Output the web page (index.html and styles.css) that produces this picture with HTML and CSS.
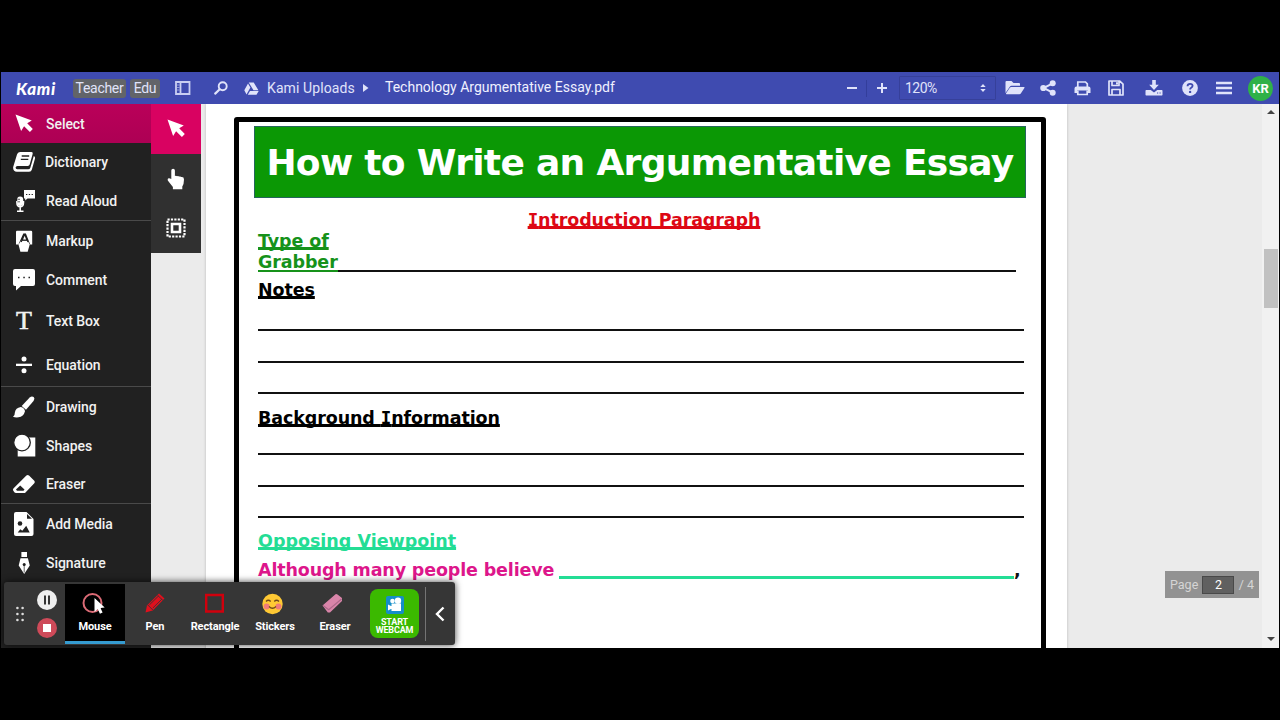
FILE: index.html
```html
<!DOCTYPE html>
<html lang="en">
<head>
  <meta charset="UTF-8" />
  <meta name="viewport" content="width=device-width, initial-scale=1.0" />
  <title>Technology Argumentative Essay.pdf | Kami</title>
  <link rel="stylesheet" href="styles.css">
</head>
<body>
<div class="app">
  <header class="topbar">
    <div class="logo">Kami</div>
    <span class="tag teacher">Teacher</span>
    <span class="tag edu">Edu</span>
    <svg class="ic-panel" width="16" height="14" viewBox="0 0 16 14"><path d="M1 1h13.500v12H1zM5.500 1v12" fill="none" stroke="currentColor" stroke-width="1.800"/><path d="M2 4h2.500M2 6.500h2.500M2 9h2.500" stroke="currentColor" opacity=".6"/></svg>
    <svg class="ic-search" width="14" height="14" viewBox="0 0 14 14"><circle cx="8.700" cy="5.200" r="4" fill="none" stroke="currentColor" stroke-width="1.900"/><path d="M5.700 8.300L1.200 12.600" stroke="currentColor" stroke-width="2.200" stroke-linecap="round"/></svg>
    <svg class="ic-drive" width="15" height="13" viewBox="0 0 15 13" fill="currentColor"><path d="M4.700 0.500h5l4.700 7.800h-4.900zM4 1.500l2.400 4.100-3.900 6.800L0.300 8.300zM6 8.900h8.700l-2.200 3.800H3.800z"/></svg>
    <span class="crumb">Kami Uploads</span>
    <svg class="ic-caret" width="6" height="8" viewBox="0 0 6 8"><path d="M0 0l5.500 4L0 8z" fill="currentColor"/></svg>
    <span class="filename">Technology Argumentative Essay.pdf</span>

    <div class="tools">
      <svg class="ic-minus" width="10" height="10" viewBox="0 0 10 10"><path d="M0 5h10" stroke="currentColor" stroke-width="2"/></svg>
      <i class="sep"></i>
      <svg class="ic-plus" width="10" height="10" viewBox="0 0 10 10"><path d="M0 5h10M5 0v10" stroke="currentColor" stroke-width="2"/></svg>
      <div class="zoom">120%
        <svg width="6" height="8" viewBox="0 0 6 8"><path d="M3 0l2.700 3H.3zM3 8L.3 5h5.400z" fill="currentColor"/></svg>
      </div>
      <svg class="ic-open" width="20" height="16" viewBox="0 0 20 16" fill="currentColor"><path d="M1.500 1h5l2 2H14q1 0 1 1v1.800H6.500q-1 0-1.700 1L0.500 13V2q0-1 1-1z"/><path d="M6.200 7H19q.9.200.4 1l-3.600 5.500q-.5.800-1.400.8H1.500q-.8-.2-.4-1l3.700-5.500q.5-.8 1.400-.8z"/></svg>
      <svg class="ic-share" width="16" height="16" viewBox="0 0 16 16" fill="currentColor"><path d="M12.800 3.300L3.500 8l9.300 4.700" fill="none" stroke="currentColor" stroke-width="2"/><circle cx="12.700" cy="3.300" r="3"/><circle cx="3.300" cy="8" r="3.100"/><circle cx="12.700" cy="12.700" r="3"/></svg>
      <svg class="ic-print" width="17" height="15" viewBox="0 0 17 15"><path d="M3.800 6V1h7.700l1.800 1.800V6" fill="none" stroke="currentColor" stroke-width="1.700"/><path d="M2.500 5.500h12q2 0 2 2V12H14V9.500H3V12H.5V7.500q0-2 2-2z" fill="currentColor"/><path d="M3.800 9.500v4h9.400v-4" fill="none" stroke="currentColor" stroke-width="1.700"/></svg>
      <svg class="ic-save" width="16" height="16" viewBox="0 0 16 16"><path d="M1 1h10.800L15 4.200V15H1zM4 1v4.500h7V1M4 15V9.500h8V15" fill="none" stroke="currentColor" stroke-width="1.700" stroke-linejoin="round"/><path d="M8 2.200h2v2.400H8z" fill="currentColor"/></svg>
      <svg class="ic-down" width="18" height="16" viewBox="0 0 18 16" fill="currentColor"><path d="M7.200 0h3.600v4.700h3L9 10 4.200 4.700h3z"/><path d="M1.200 10h4.500L9 12.600l3.300-2.600h4.500q.7 0 .7.700v4.100q0 .7-.7.700H1.200q-.7 0-.7-.7v-4.100q0-.7.700-.7z"/><path d="M12 13h1.200M14.500 13h1.200" stroke="#3f4bb0" stroke-width="1.200"/></svg>
      <svg class="ic-help" width="16" height="16" viewBox="0 0 16 16"><circle cx="8" cy="8" r="7.900" fill="currentColor"/><path d="M5.500 6.200q.1-2.400 2.500-2.400 2.600 0 2.600 2 0 1.200-1.400 1.900Q8.100 8.300 8.100 9.500" fill="none" stroke="#3f4bb0" stroke-width="1.800"/><circle cx="8.100" cy="11.900" r="1.200" fill="#3f4bb0"/></svg>
      <svg class="ic-menu" width="16" height="14" viewBox="0 0 16 14"><path d="M0 2h16M0 7h16M0 12h16" stroke="currentColor" stroke-width="2.300"/></svg>
      <div class="avatar">KR</div>
    </div>
  </header>

  <div class="main">
    <nav class="sidebar">
      <a class="item select active"><svg viewBox="0 0 22 22"><path d="M2.500 1.500l16.300 6-4.600 2.700 5.600 5.900-2.900 2.900-5.800-5.800-3 4.700z" fill="#fff"/></svg>Select</a>
      <a class="item dict"><svg viewBox="0 0 22 22"><path d="M7 1h11.500q1.600.1 1.200 1.700l-3 10.800q-.4 1.400-1.900 1.400H4.500q-1.800 0-1.900 1.700 0 1.700 1.700 1.700h10.900q1.600 0 2.100-1.500L20.800 5q1.700.8 1.200 2.500l-3.100 11q-.6 2.300-2.800 2.300H3.900Q0 20.500.1 16.200L4 3.500Q4.600 1 7 1z" fill="#fff"/><path d="M8.700 5h7.500M7.800 8.400h7.500" stroke="#212121" stroke-width="1.400"/></svg>Dictionary</a>
      <a class="item"><svg viewBox="0 0 22 22"><path d="M11 0h11v8.500h-7.500l-2.300 2V8.500H11z" fill="#fff"/><path d="M13 4.500h1.300M15.800 4.500h1.300M18.600 4.500h1.300" stroke="#212121" stroke-width="1.200"/><rect x="4.200" y="6.500" width="6" height="9.500" rx="2.900" fill="#fff"/><path d="M3.900 11v1.800q0 4 3.300 4t3.300-4V11M7.200 17v4M4 21.300h6.500" fill="none" stroke="#fff" stroke-width="1.500"/><path d="M4.500 9.300h2.500M4.500 11.800h2.500" stroke="#212121" stroke-width=".7"/></svg>Read Aloud</a>
      <hr>
      <a class="item"><svg viewBox="0 0 22 22"><path d="M4 .7h14q1.200 0 1.200 1.200V14.500h-2L12.900 3.500h-2.600L5.400 14.500H3V1.900Q3 .7 4 .7z" fill="#fff"/><path d="M8.300 10.500h6.300l2.100 4-2 7.200H7.400l-1.900-7.200z" fill="#fff"/><path d="M11.600 4L8.200 12M11.600 4l3.400 8M9.200 10.200h4.900" stroke="#212121" stroke-width="1.200"/><path d="M11.600 5.700l1.500 3.800h-3z" fill="#fff"/></svg>Markup</a>
      <a class="item"><svg viewBox="0 0 22 22"><path d="M2 0h18q2 0 2 2v13q0 2-2 2H8l-5 4.500V17H2q-2 0-2-2V2Q0 0 2 0z" fill="#fff"/><path d="M5 8.500h1.500M10.300 8.500h1.500M15.500 8.500H17" stroke="#212121" stroke-width="1.700"/></svg>Comment</a>
      <a class="item textbox"><b class="t-icon">T</b>Text Box</a>
      <a class="item equation"><svg viewBox="0 0 22 22"><path d="M3 9.700h16v2.300H3z" fill="#fff"/><circle cx="11" cy="4.900" r="2.500" fill="#fff"/><circle cx="11" cy="16.800" r="2.500" fill="#fff"/></svg>Equation</a>
      <hr>
      <a class="item drawing"><svg viewBox="0 0 22 22"><path d="M8.700 10l8-8.500q2.200-2 4-.4 1.600 1.700-.2 4L13 13.800z" fill="#fff"/><path d="M7.800 11q3.700.8 4.200 4.300-1.400 5.500-6.500 6-3.400.3-5.500-.5 2-.8 1.800-4Q2.500 11.800 7.800 11z" fill="#fff"/></svg>Drawing</a>
      <a class="item"><svg viewBox="0 0 22 22"><path d="M15 2.500h7.300v19H4.700V14h4z" fill="#fff"/><circle cx="9" cy="7.500" r="8.300" fill="#fff" stroke="#212121" stroke-width="1.300"/></svg>Shapes</a>
      <a class="item"><svg viewBox="0 0 22 22"><path d="M13.400 2.500q1.300-1.200 2.600 0l5.300 5.200q1.100 1.200 0 2.500L12 20H3q-1 0-1.700-.7L.2 17.600q-.7-1 .2-2.200z" fill="#fff"/><path d="M3 16.500L7.200 12.500l4.300 4-1 1.200H4z" fill="#212121"/></svg>Eraser</a>
      <hr>
      <a class="item media"><svg viewBox="0 0 22 24"><path d="M3 0h10.500L20.500 7v15q0 2-2 2H3q-2 0-2-2V2Q1 0 3 0z" fill="#fff"/><path d="M14 2v4.700h5z" fill="#212121"/><circle cx="7" cy="11.500" r="2.300" fill="#212121"/><path d="M4.700 20.500l2.600-3.200 2 1.500 3.900-5 3.500 6.700z" fill="#212121"/></svg>Add Media</a>
      <a class="item"><svg viewBox="0 0 22 22"><path d="M8.400 0h5.600v5H8.400zM7.500 6.300h7.400l1.900 7.200L11.200 22 5.700 13.500z" fill="#fff"/><circle cx="11.200" cy="12.500" r="1.500" fill="#212121"/><path d="M11.200 12v8.500" stroke="#212121" stroke-width=".7"/></svg>Signature</a>
    </nav>

    <div class="viewer">
      <div class="subtools">
        <div class="sub on"><svg width="22" height="22" viewBox="0 0 22 22"><path d="M2.500 1.500l16.300 6-4.600 2.700 5.600 5.900-2.900 2.900-5.800-5.800-3 4.700z" fill="#fff"/></svg></div>
        <div class="sub"><svg width="22" height="22" viewBox="0 0 22 22"><path d="M6.300 2.500q0-1.800 1.800-1.800T9.900 2.500v5.600q.8-.8 2.200.1 1.100-.5 2.100.4 1.400-.5 2.200.5 2.600-.3 2.600 2.400 0 4.500-1.700 7v2.800H7.900v-2.200Q5.500 16 2.800 12.500q-.6-1.800.8-2.300 1.200-.2 2.700.9z" fill="#fff"/></svg></div>
        <div class="sub"><svg width="20" height="20" viewBox="0 0 20 20"><path d="M1.500 1.500h17v17h-17z" fill="none" stroke="#fff" stroke-width="2.200" stroke-dasharray="2.200 1.200"/><path d="M6 6h8v8H6z" fill="none" stroke="#fff" stroke-width="2.600"/></svg></div>
      </div>

      <div class="page">
        <div class="frame">
          <h1>How to Write an Argumentative Essay</h1>
          <h2 class="intro"><u><span class="cap-i">I</span>ntroduction Paragraph</u></h2>
          <div class="grabber">
            <div class="green">
              <div class="type"><u>Type of</u></div>
              <div class="grab">Grabber</div>
            </div>
            <i class="blank"></i>
          </div>
          <h3 class="notes"><u>Notes</u></h3>
          <div class="lines"><i></i><i></i><i></i></div>
          <h3 class="background"><u>Background <span class="cap-i">I</span>nformation</u></h3>
          <div class="lines second"><i></i><i></i><i></i></div>
          <h3 class="opposing"><u>Opposing Viewpoint</u></h3>
          <div class="although"><span>Although many people believe</span><i></i><b>,</b></div>
        </div>
      </div>
      <div class="pager">Page <span class="num">2</span> / 4</div>
    </div>

    <div class="scrollbar">
      <i class="up"></i>
      <i class="thumb"></i>
      <i class="down"></i>
    </div>

    <!-- screen recorder toolbar -->
    <div class="recorder">
      <svg class="grip" width="8" height="16" viewBox="0 0 8 16" fill="#ddd"><circle cx="1.400" cy="2" r="1.300"/><circle cx="6.600" cy="2" r="1.300"/><circle cx="1.400" cy="8" r="1.300"/><circle cx="6.600" cy="8" r="1.300"/><circle cx="1.400" cy="14" r="1.300"/><circle cx="6.600" cy="14" r="1.300"/></svg>
      <div class="controls">
        <svg width="20" height="20" viewBox="0 0 20 20"><circle cx="10" cy="10" r="10" fill="#eee"/><path d="M8 5.500v9M12 5.500v9" stroke="#333" stroke-width="2"/></svg>
        <svg width="20" height="20" viewBox="0 0 20 20"><circle cx="10" cy="10" r="10" fill="#ce4a59"/><path d="M6 6h8v8H6z" fill="#fff"/></svg>
      </div>
      <div class="rec on"><svg width="24" height="24" viewBox="0 0 24 24"><circle cx="9.500" cy="12" r="9" fill="none" stroke="#dc6b76" stroke-width="2"/><path d="M11.500 7v14l3.300-2.900 2.100 4.700 2.700-1.200-2.100-4.600 4.200-.4z" fill="#fff"/></svg>Mouse</div>
      <div class="rec"><svg width="24" height="24" viewBox="0 0 24 24"><path d="M2.500 21.500l1.500-7L16 2.500 21.500 7.500 9.700 19.500z" fill="#e0101d"/><path d="M6.500 13.800L15.500 5M9.800 17L19 8M14.500 4.300l5.400 5M4.800 14l5 5" stroke="#4a3033" stroke-width="1"/></svg>Pen</div>
      <div class="rec"><svg width="24" height="24" viewBox="0 0 24 24"><path d="M3.200 4h16.600v16.500H3.200z" fill="none" stroke="#d1000d" stroke-width="2.400"/></svg>Rectangle</div>
      <div class="rec"><svg width="24" height="24" viewBox="0 0 24 24"><circle cx="9.500" cy="13" r="10.200" fill="#ffc934"/><circle cx="3.600" cy="15.500" r="3" fill="#f17b78"/><circle cx="15.400" cy="15.500" r="3" fill="#f17b78"/><path d="M3 10.500q2.200-2.500 4.700 0M11.300 10.500q2.200-2.500 4.700 0M6 15.500q3.500 3.500 7 0" fill="none" stroke="#70471d" stroke-width="1.300"/></svg>Stickers</div>
      <div class="rec"><svg width="24" height="24" viewBox="0 0 24 24"><path d="M-.5 14.500L12.500 3.200q1-.7 2 .2l4.500 3.700v3L7 21.500H4.800z" fill="#d985a9"/><path d="M0 14.500l5.700 4.200L18.500 8" fill="none" stroke="#ad6889" stroke-width="1.100"/></svg>Eraser</div>
      <div class="webcam">
        <svg width="18" height="18" viewBox="0 0 18 18"><rect width="18" height="18" rx="2" fill="#168ec8"/><circle cx="6.500" cy="5" r="2.300" fill="#fff"/><circle cx="12" cy="4.800" r="3.200" fill="#fff"/><path d="M5.500 7.500H15v7.500H5.500zM2 8.500l4 2v2l-4 2z" fill="#fff"/></svg>
        START<br>WEBCAM
      </div>
      <i class="bar"></i>
      <svg class="collapse" width="10" height="16" viewBox="0 0 10 16"><path d="M8.500 1.500L2 8l6.500 6.500" fill="none" stroke="#fff" stroke-width="2.400"/></svg>
    </div>
  </div>
</div>
</body>
</html>
```
FILE: styles.css
```css
* { box-sizing: border-box; }

body {
  margin: 0;
  padding: 72px 1px;
  height: 720px;
  overflow: hidden;
  background: #000;
  font-family: Roboto, sans-serif;
}

svg {
  display: block;
  flex: none;
  overflow: visible;
}

.app {
  height: 576px;
  display: flex;
  flex-direction: column;
  overflow: hidden;
}

/* top bar */
.topbar {
  height: 32px;
  flex: none;
  display: flex;
  align-items: center;
  background: #3f4bb0;
  color: #e0e3fa;
  font-size: 14px;
  white-space: nowrap;
}

.logo {
  width: 60px;
  padding-left: 15px;
  font: italic 900 17px Lato, sans-serif;
  color: #fff;
  letter-spacing: .6px;
}

.tag {
  height: 19px;
  line-height: 19px;
  margin-left: 12px;
  border-radius: 3px;
  background: #626469;
  text-align: center;
  letter-spacing: -.3px;
}

.teacher { width: 53px; }
.edu { width: 30px; margin-left: 4px; }
.ic-panel { margin-left: 15px; color: #c9cef2; }
.ic-search { margin-left: 23px; }
.ic-drive { margin-left: 16px; }

.crumb {
  width: 87px;
  margin: 0 0 1px 8px;
  letter-spacing: .1px;
}

.ic-caret { margin-left: 9px; }

.filename {
  margin: 0 0 2px 16px;
  color: #f0f1ff;
}

.tools {
  display: flex;
  align-items: center;
  margin-left: auto;
  padding-right: 6px;
}

.sep {
  width: 1px;
  height: 17px;
  margin: 0 10px 0 9px;
  background: #333e9b;
}

.zoom {
  width: 97px;
  height: 24px;
  margin: 0 8px 0 12px;
  padding: 0 9px 0 5px;
  border: 1px solid #36409a;
  border-radius: 1px;
  display: flex;
  align-items: center;
  justify-content: space-between;
  letter-spacing: -.5px;
}

.ic-open { margin-left: 1px; }
.ic-share { margin-left: 15px; }
.ic-print { margin-left: 18px; }
.ic-save { margin-left: 17px; }
.ic-down { margin-left: 21px; }
.ic-help { margin-left: 19px; }
.ic-menu { margin-left: 18px; }

.avatar {
  width: 25px;
  height: 25px;
  margin-left: 16px;
  border-radius: 50%;
  background: #2fb148;
  color: #fff;
  font-weight: 700;
  font-size: 13px;
  line-height: 25px;
  text-align: center;
}

.main {
  position: relative;
  flex: 1;
  display: flex;
  overflow: hidden;
}

/* left tools */
.sidebar {
  width: 150px;
  flex: none;
  background: #212121;
}

.sidebar hr {
  height: 1px;
  margin: 0;
  border: 0;
  background: #4a4a4a;
}

.item {
  height: 39px;
  padding-left: 12px;
  display: flex;
  align-items: center;
  gap: 11px;
  color: #f1f1f1;
  font-size: 14px;
  font-weight: 500;
  letter-spacing: -.05px;
}

.item svg { width: 22px; height: 22px; }
.item.active { background: linear-gradient(#ba0059, #ad0054); }
.item.dict { height: 38px; gap: 10px; }
.item.textbox { height: 44px; }
.item.equation { height: 43px; }
.item.drawing { height: 40px; }
.item.drawing ~ .item { height: 38px; }
.item.media, .item.media + .item { height: 39px !important; }
.item.media svg { height: 24px; }

.t-icon {
  width: 22px;
  font: 400 26px/22px "Liberation Serif", serif;
  -webkit-text-stroke: .6px #f1f1f1;
  text-align: center;
}

.viewer {
  position: relative;
  flex: 1;
  background: #ebebeb;
}

.subtools {
  position: absolute;
  left: 0;
  top: 0;
  width: 50px;
  height: 149px;
  background: #303030;
}

.sub {
  height: 50px;
  display: flex;
  align-items: center;
  justify-content: center;
}

.sub + .sub { height: 49px; }
.sub.on { background: #d90261; }

/* document */
.page {
  width: 861px;
  height: 560px;
  margin-left: 55px;
  padding: 13px 21px 0 28px;
  background: #fff;
  box-shadow: 0 0 3px #bbb;
  font-family: "DejaVu Sans", sans-serif;
  font-weight: 700;
}

.frame {
  height: 560px;
  padding: 4px 15px 0 15px;
  border: 5px solid #000;
  border-radius: 3px;
}

.frame h1 {
  width: 772px;
  height: 72px;
  margin: 0;
  border: 1px solid #25665c;
  background: #0b9805;
  color: #fff;
  font-size: 36px;
  line-height: 71px;
  letter-spacing: -.68px;
  text-align: center;
  white-space: nowrap;
}

.frame h2, .frame h3 {
  margin: 0;
  font-size: 17.500px;
  line-height: 22px;
  letter-spacing: -.1px;
}

.frame u {
  text-decoration-thickness: 3px;
  text-underline-offset: 0;
  text-decoration-skip-ink: none;
}

.cap-i { font-family: "DejaVu Sans Mono", monospace; }

.frame .intro {
  margin-top: 11px;
  padding-left: 8px;
  color: #dd0814;
  text-align: center;
}

.grabber {
  display: flex;
  align-items: flex-end;
  height: 41px;
  padding-left: 4px;
}

.green {
  display: flex;
  flex-direction: column;
  width: 80px;
  color: #16921a;
  font-size: 17.500px;
  line-height: 21px;
  letter-spacing: -.1px;
}

.type, .grab { height: 21px; padding-top: 1px; }
.grab { border-bottom: 2px solid #16921a; }

.blank {
  width: 678px;
  height: 2px;
  background: #111;
}

.frame .notes { margin: 7px 0 0 4px; }

.lines {
  width: 766px;
  margin: 28px 0 0 4px;
  display: flex;
  flex-direction: column;
  gap: 29.500px;
}

.lines i { height: 2px; background: #111; }
.frame .background { margin: 13px 0 0 4px; }
.lines.second { margin-top: 24px; }
.frame .opposing { margin: 12px 0 0 4px; color: #23dd95; letter-spacing: 0; }

.although {
  display: flex;
  align-items: baseline;
  margin: 7px 0 0 4px;
  color: #dd168b;
  font-size: 17.500px;
  line-height: 22px;
  letter-spacing: -.15px;
  white-space: nowrap;
}

.although span { width: 301px; }

.although i {
  width: 455px;
  height: 3px;
  align-self: flex-end;
  margin-bottom: 2px;
  background: #23dd95;
}

.although b { color: #111; }

.pager {
  position: absolute;
  right: 3px;
  bottom: 50px;
  width: 94px;
  height: 27px;
  padding: 0 5px;
  display: flex;
  align-items: center;
  justify-content: space-between;
  background: #929292;
  color: #d5d5d5;
  font-size: 12.500px;
}

.num {
  width: 32px;
  height: 18px;
  border: 1px solid #494949;
  background: #606060;
  color: #fff;
  line-height: 16px;
  text-align: center;
}

.scrollbar {
  width: 17px;
  flex: none;
  display: flex;
  flex-direction: column;
  align-items: center;
  background: #f1f1f1;
}

.up, .down {
  border: 4px solid transparent;
  border-bottom-color: #444;
  border-top-width: 0;
  margin-top: 6px;
}

.thumb {
  width: 14px;
  height: 59px;
  margin-top: 135px;
  background: #c1c1c1;
}

.down {
  margin: auto 0 7px;
  border: 4px solid transparent;
  border-top-color: #444;
  border-bottom-width: 0;
}

/* recorder */
.recorder {
  position: absolute;
  left: 3px;
  top: 478px;
  width: 451px;
  height: 63px;
  display: flex;
  align-items: center;
  border-radius: 3px;
  background: #363636;
  box-shadow: 0 0 7px rgba(0, 0, 0, .75);
  color: #fff;
}

.grip { margin-left: 12px; }

.controls {
  display: flex;
  flex-direction: column;
  gap: 8px;
  margin: 0 8px 0 13px;
}

.rec {
  width: 60px;
  height: 60px;
  padding-top: 7px;
  display: flex;
  flex-direction: column;
  align-items: center;
  gap: 4px;
  font-size: 11px;
  font-weight: 700;
  line-height: 15px;
  letter-spacing: -.1px;
}

.rec.on {
  background: #000;
  border-bottom: 3px solid #359bd0;
}

.webcam {
  width: 49px;
  height: 49px;
  margin-left: 5px;
  padding-top: 7px;
  display: flex;
  flex-direction: column;
  align-items: center;
  border-radius: 8px;
  background: #3bb900;
  font-size: 9px;
  font-weight: 700;
  line-height: 8px;
  letter-spacing: -.15px;
  text-align: center;
}

.webcam svg { margin-bottom: 4px; }

.bar {
  width: 1px;
  height: 54px;
  margin-left: 6px;
  background: #747474;
}

.collapse { margin-left: 9px; }
```
